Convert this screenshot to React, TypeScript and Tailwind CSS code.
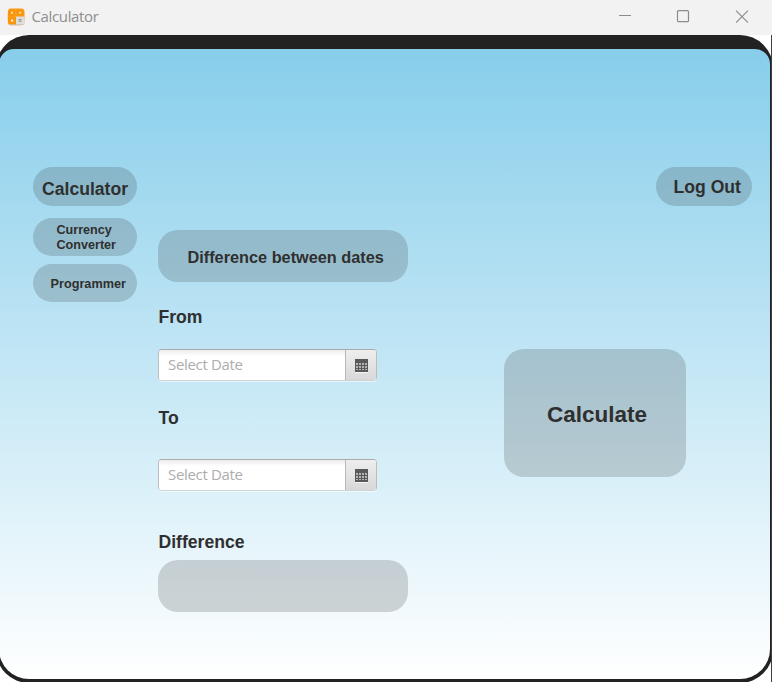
import React from "react";

const pill =
  "flex bg-[#2d2d2d]/[0.19] font-bold text-[#2f2f2f] font-['Liberation_Sans',Arial,sans-serif] whitespace-nowrap";
const label =
  "pl-[0.5px] font-['Liberation_Sans',Arial,sans-serif] font-bold text-[17.6px] leading-5 text-[#2f2f2f]";

function AppIcon() {
  return (
    <svg width="18" height="18" viewBox="0 0 18 18" className="ml-[7px]">
      <defs>
        <clipPath id="app">
          <rect x="0.8" y="0.5" width="16.7" height="16.7" rx="3.5" />
        </clipPath>
      </defs>
      <g clipPath="url(#app)">
        <rect width="18" height="18" fill="#f9960b" />
        <rect x="9" y="8.5" width="9" height="10" fill="#dedede" />
        <path d="M8.8 0v9" stroke="#fbb44a" strokeWidth="0.5" />
        <path d="M0 8.6h9" stroke="#fba935" strokeWidth="0.5" />
        <path d="M0 16.8h18" stroke="#c9c3ba" strokeWidth="1.2" />
      </g>
      <rect x="4" y="3.7" width="2" height="2" fill="#ffe0ad" />
      <rect x="12" y="3.7" width="2.2" height="2" fill="#ffd596" />
      <rect x="4" y="11.4" width="2.2" height="2.2" fill="#fff0d9" />
      <path d="M11.6 11.6h3M11.6 13.2h3" stroke="#777" strokeWidth="0.8" />
    </svg>
  );
}

function DateField() {
  return (
    <div className="flex h-[32px] w-[219px] overflow-hidden rounded-[4px] border border-[#bdbdbd] border-t-[#aaaaaa] border-b-[#cfd3d5] bg-white shadow-[0_1px_0_rgba(255,255,255,0.6)]">
      <div className="flex flex-1 items-center bg-linear-to-b from-[#ececec] via-white via-20% to-white pb-[2px] pl-[9px] font-['Open_Sans',sans-serif] text-[15px] text-[#adadad]">
        <span className="tracking-[-0.33px]">Select Date</span>
      </div>
      <div className="flex w-[31px] items-center justify-center border-l border-[#b8b8b8] bg-linear-to-b from-[#eeeeee] to-[#d8d8d8]">
        <svg width="13" height="14" viewBox="0 0 13 14" shapeRendering="crispEdges" className="mt-px">
          <path d="M0 13h13v1H0z" fill="#f4f4f4" />
          <path d="M0 0h13v13H0z" fill="#595959" />
          <path
            d="M1 4h2v2H1zM4 4h2v2H4zM7 4h2v2H7zM10 4h2v2h-2zM1 7h2v2H1zM4 7h2v2H4zM7 7h2v2H7zM10 7h2v2h-2zM1 10h2v1H1zM4 10h2v1H4zM7 10h2v1H7zM10 10h2v1h-2z"
            fill="#b4b4b4"
          />
        </svg>
      </div>
    </div>
  );
}

export default function App() {
  return (
    <div className="flex h-[682px] w-[772px] flex-col overflow-hidden bg-white">
      <header className="flex h-[35px] shrink-0 items-center bg-[#f2f2f2] pb-[2px]">
        <AppIcon />
        <span className="ml-[6.5px] flex-1 font-['Open_Sans',sans-serif] text-[15px] tracking-[-0.36px] text-[#8e8e8e]">
          Calculator
        </span>
        <svg width="134" height="14" viewBox="0 0 134 14" className="mr-[20px]" fill="none" stroke="#8b8b8b">
          <path d="M1 5.5h12" />
          <rect x="59.5" y="0.7" width="11" height="11" rx="1" strokeWidth="1.2" />
          <path d="M118 0.7l12 12M130 0.7l-12 12" strokeWidth="1.1" />
        </svg>
      </header>
      <div className="flex flex-1">
        <div className="h-[647px] w-[771px] shrink-0 overflow-hidden">
          <div className="-ml-[4px] h-[648px] w-[777px] rounded-[33px] bg-[#222222] pt-[14px] pl-[3px]">
            <main className="flex h-[630px] w-[771px] rounded-t-[15px] rounded-b-[30px] bg-linear-to-b/srgb from-[#87ceeb] to-white pt-[118px] pl-[34px]">
              <nav className="flex w-[104px] flex-col">
                <button className={`${pill} h-[39px] items-center rounded-[20px] pt-[5px] pl-[9px] text-[17.6px]`}>
                  Calculator
                </button>
                <button className={`${pill} mt-[12px] h-[38px] items-center rounded-[20px] pt-[2px] pl-[23.5px] text-left text-[12.6px] leading-[15px]`}>
                  <span>Currency<br />Converter</span>
                </button>
                <button className={`${pill} mt-[8px] h-[38px] items-center rounded-[20px] pt-[3px] pl-[17.5px] text-[12.7px]`}>
                  Programmer
                </button>
              </nav>
              <div className="ml-[21px] flex flex-1 flex-col">
                <button className={`${pill} mr-[18px] h-[39px] w-[96px] items-center self-end rounded-[20px] pt-[2px] pl-[17.5px] text-[17.6px]`}>
                  Log Out
                </button>
                <div className="mt-[24px] flex items-start">
                  <section className="flex w-[250px] flex-col">
                    <div className={`${pill} h-[52px] items-center rounded-[20px] pt-[3px] pl-[29.5px] text-[16.3px]`}>
                      Difference between dates
                    </div>
                    <span className={`${label} mt-[25px] mb-[22px]`}>From</span>
                    <DateField />
                    <span className={`${label} mt-[27px] mb-[31px]`}>To</span>
                    <DateField />
                    <span className={`${label} mt-[41px] mb-[8px]`}>Difference</span>
                    <output className={`${pill} h-[52px] rounded-[20px]`} />
                  </section>
                  <button className={`${pill} mt-[119px] ml-[96px] h-[128px] w-[182px] items-center rounded-[20px] pt-[3px] pl-[43px] text-[22.5px]`}>
                    Calculate
                  </button>
                </div>
              </div>
            </main>
          </div>
        </div>
        <div className="h-full w-px shrink-0 bg-[#3d3f42]" />
      </div>
    </div>
  );
}
